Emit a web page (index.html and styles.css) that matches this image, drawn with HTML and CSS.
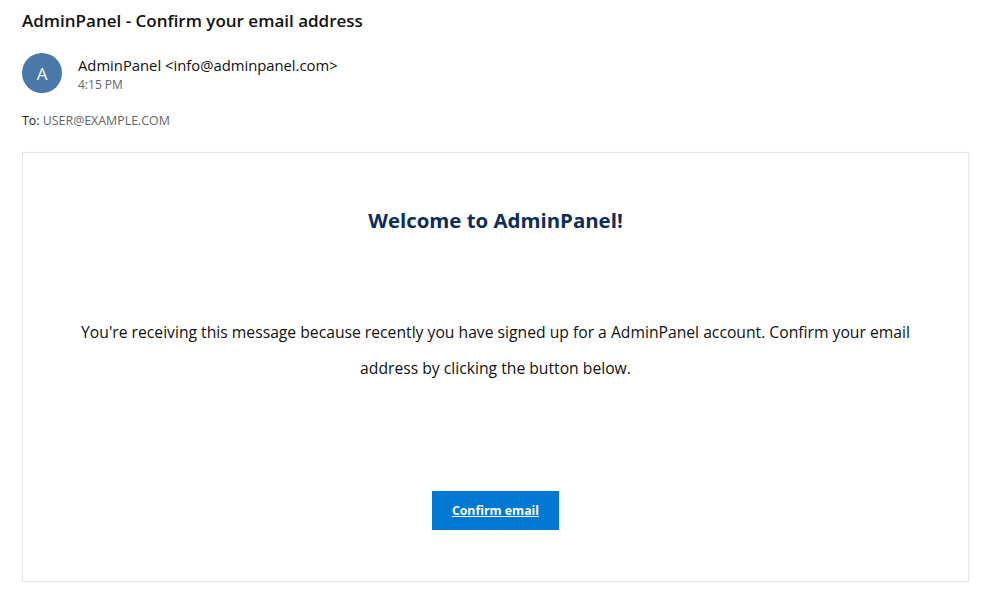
FILE: index.html
```html
<!DOCTYPE html>
<html>
<head>
<meta charset="utf-8">
<link rel="stylesheet" href="styles.css">
</head>
<body>
<div class="page">
  <h1 class="subject">AdminPanel - Confirm your email address</h1>
  <div class="sender">
    <div class="avatar">A</div>
    <div class="sender-info">
      <div class="from">AdminPanel &lt;info@adminpanel.com&gt;</div>
      <div class="time">4:15 PM</div>
    </div>
  </div>
  <div class="to">To: <span class="to-addr">USER@EXAMPLE.COM</span></div>
  <div class="card">
    <h2 class="welcome">Welcome to AdminPanel!</h2>
    <p class="message">You're receiving this message because recently you have signed up for a AdminPanel account. Confirm your email address by clicking the button below.</p>
    <div class="actions"><a class="button" href="#">Confirm email</a></div>
  </div>
</div>
</body>
</html>
```
FILE: styles.css
```css
html, body { margin: 0; padding: 0; background: #fff; }
body { font-family: "Open Sans", "Noto Sans", sans-serif; color: #000; }
.page { padding: 10px 23px 0 22px; }
.subject { margin: 0; font-size: 17px; font-weight: 600; line-height: 22px; color: #111; }
.sender { display: flex; align-items: flex-start; margin-top: 21px; height: 40px; }
.avatar { width: 40px; height: 40px; border-radius: 50%; background: #4a78a8; color: #fff; display: flex; align-items: center; justify-content: center; font-size: 17px; flex: none; }
.sender-info { margin-left: 16px; padding-top: 2px; }
.from { font-size: 14.8px; line-height: 20px; color: #111; }
.time { font-size: 12px; line-height: 20px; color: #666; }
.to { margin-top: 20px; font-size: 12.4px; line-height: 16px; color: #222; }
.to-addr { color: #666; }
.card { margin-top: 23px; border: 1px solid #e6e6e6; box-shadow: 0 0 2px rgba(0,0,0,0.04); height: 430px; box-sizing: border-box; text-align: center; padding-top: 53px; }
.welcome { margin: 0; font-size: 20.4px; font-weight: 700; color: #0b2d5c; line-height: 28px; }
.message { margin: 80px auto 0; width: 850px; font-size: 15.7px; line-height: 36px; color: #111; }
.actions { margin-top: 105px; }
.button { display: inline-block; background: #0078d4; color: #fff; font-size: 12.3px; font-weight: 700; padding: 10px 20px; line-height: 19px; text-decoration: underline; }
```
